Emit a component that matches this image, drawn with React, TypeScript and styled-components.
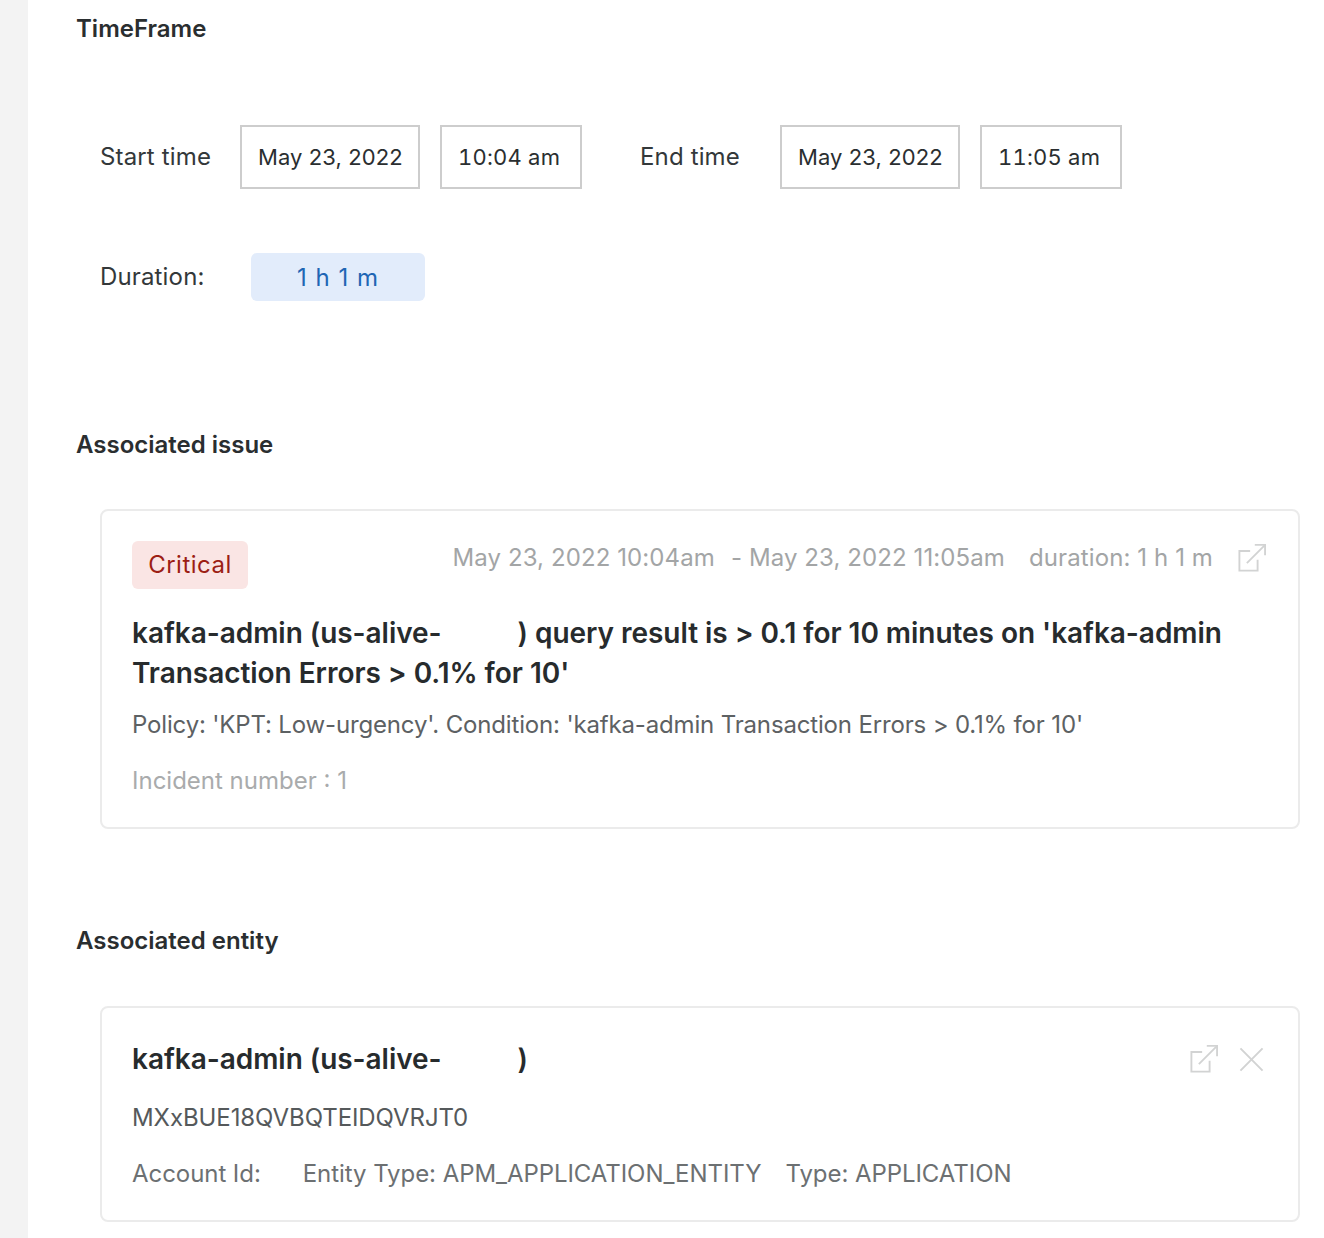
import React from "react";
import styled, { createGlobalStyle } from "styled-components";

const Global = createGlobalStyle`
  html, body { margin: 0; padding: 0; background: #fff; }
  body { font-family: Inter, "Liberation Sans", sans-serif; color: #2a2e30; }
`;

const Page = styled.div`
  display: flex;
  width: 1324px;
  height: 1238px;
  overflow: hidden;
`;
const Rail = styled.div`
  width: 28px;
  flex: none;
  background: #f3f3f3;
`;
const Main = styled.main`
  flex: 1;
  padding: 14px 24px 0 48px;
  min-width: 0;
`;
const Heading = styled.h2<{ $top?: number }>`
  margin: ${(p) => p.$top ?? 0}px 0 0;
  font-size: 24px;
  line-height: 29px;
  font-weight: 600;
  color: #2a2e30;
`;
const TimeRow = styled.div`
  display: flex;
  align-items: center;
  margin: 82px 0 0 24px;
`;
const Label = styled.span<{ $width: number }>`
  width: ${(p) => p.$width}px;
  flex: none;
  margin-top: -2px;
  font-size: 24px;
  line-height: 29px;
  letter-spacing: 0.15px;
  color: #33383a;
`;
const Field = styled.div<{ $width: number; $gap: number; $tabular?: boolean }>`
  width: ${(p) => p.$width}px;
  height: 64px;
  margin-right: ${(p) => p.$gap}px;
  flex: none;
  box-sizing: border-box;
  display: flex;
  align-items: center;
  padding-left: 16px;
  border: 2px solid #cdcdcd;
  font-size: 22px;
  letter-spacing: ${(p) => (p.$tabular ? 0.2 : 0.1)}px;
  font-variant-numeric: ${(p) => (p.$tabular ? "tabular-nums" : "normal")};
  color: #2a2e30;
  white-space: nowrap;
`;
const DurationRow = styled.div`
  display: flex;
  align-items: center;
  margin: 64px 0 0 24px;
`;
const DurationChip = styled.div`
  width: 174px;
  height: 48px;
  display: flex;
  align-items: center;
  justify-content: center;
  border-radius: 6px;
  background: #e2ecfb;
  color: #1f66b4;
  font-size: 24px;
  letter-spacing: 1px;
`;
const Card = styled.section<{ $height: number; $top: number }>`
  margin: ${(p) => p.$top}px 0 0 24px;
  width: 1200px;
  height: ${(p) => p.$height}px;
  box-sizing: border-box;
  border: 2px solid #ebebeb;
  border-radius: 8px;
  padding: 30px 30px 0;
`;
const CardTop = styled.div`
  display: flex;
  align-items: flex-start;
  justify-content: space-between;
`;
const Severity = styled.div`
  width: 116px;
  height: 48px;
  padding-bottom: 2px;
  box-sizing: border-box;
  display: flex;
  align-items: center;
  justify-content: center;
  border-radius: 6px;
  background: #fae5e4;
  color: #9c1e14;
  font-size: 24px;
  letter-spacing: 0.5px;
`;
const Meta = styled.div`
  display: flex;
  align-items: center;
  height: 32px;
  font-size: 24px;
  letter-spacing: 0.1px;
  color: #a3a5a6;
  white-space: nowrap;
`;
const MetaItem = styled.span<{ $left?: number }>`
  margin-left: ${(p) => p.$left ?? 0}px;
`;
const IconSlot = styled.span<{ $left: number }>`
  display: flex;
  margin: 2px 2px 0 ${(p) => p.$left}px;
  color: #d2d3d3;
`;
const Title = styled.h3<{ $top: number }>`
  margin: ${(p) => p.$top}px 0 0;
  font-size: 28px;
  line-height: 40px;
  font-weight: 600;
  letter-spacing: -0.04px;
  color: #272b2d;
`;
const Redacted = styled.span<{ $width: number }>`
  display: inline-block;
  width: ${(p) => p.$width}px;
`;
const Policy = styled.p`
  margin: 16px 0 0;
  font-size: 24px;
  line-height: 32px;
  letter-spacing: -0.16px;
  color: #5d6163;
  white-space: nowrap;
`;
const Incident = styled.p`
  margin: 24px 0 0;
  font-size: 24px;
  line-height: 32px;
  color: #a9abac;
`;
const EntityHead = styled.div`
  display: flex;
  align-items: center;
  justify-content: space-between;
  padding-top: 1px;
`;
const EntityIcons = styled.div`
  display: flex;
  align-items: center;
  gap: 21px;
  margin-right: 4px;
  color: #d2d3d3;
`;
const Guid = styled.p`
  margin: 23px 0 0;
  font-size: 24px;
  line-height: 32px;
  letter-spacing: -0.08px;
  color: #55595b;
`;
const Facts = styled.div`
  display: flex;
  margin-top: 24px;
  font-size: 24px;
  line-height: 32px;
  letter-spacing: -0.06px;
  color: #6c7072;
  white-space: nowrap;
`;
const Fact = styled.span<{ $left?: number }>`
  margin-left: ${(p) => p.$left ?? 0}px;
`;

const ExpandIcon = () => (
  <svg width="28" height="28" viewBox="0 0 30 30" fill="none" stroke="currentColor" strokeWidth="2">
    <path d="M13 7.5H1.5V28.5H21V17" />
    <path d="M9.5 20.5L28.5 1.5" />
    <path d="M18 1H29V12" />
  </svg>
);
const CloseIcon = () => (
  <svg width="25" height="25" viewBox="0 0 26 26" fill="none" stroke="currentColor" strokeWidth="2">
    <path d="M1.5 1.5L24.5 24.5M24.5 1.5L1.5 24.5" />
  </svg>
);

export default function App() {
  return (
    <Page>
      <Global />
      <Rail />
      <Main>
        <Heading>TimeFrame</Heading>
        <TimeRow>
          <Label $width={140}>Start time</Label>
          <Field $width={180} $gap={20}>May 23, 2022</Field>
          <Field $width={142} $gap={58} $tabular>10:04 am</Field>
          <Label $width={140}>End time</Label>
          <Field $width={180} $gap={20}>May 23, 2022</Field>
          <Field $width={142} $gap={0} $tabular>11:05 am</Field>
        </TimeRow>
        <DurationRow>
          <Label $width={151}>Duration:</Label>
          <DurationChip>1 h 1 m</DurationChip>
        </DurationRow>
        <Heading $top={129}>Associated issue</Heading>
        <Card $height={320} $top={50}>
          <CardTop>
            <Severity>Critical</Severity>
            <Meta>
              <MetaItem>May 23, 2022 10:04am</MetaItem>
              <MetaItem $left={16}>- May 23, 2022 11:05am</MetaItem>
              <MetaItem $left={24}>duration: 1 h 1 m</MetaItem>
              <IconSlot $left={25}><ExpandIcon /></IconSlot>
            </Meta>
          </CardTop>
          <Title $top={24}>
            kafka-admin (us-alive-<Redacted $width={76} />) query result is &gt; 0.1 for 10 minutes on 'kafka-admin Transaction Errors &gt; 0.1% for 10'
          </Title>
          <Policy>Policy: 'KPT: Low-urgency'. Condition: 'kafka-admin Transaction Errors &gt; 0.1% for 10'</Policy>
          <Incident>Incident number : 1</Incident>
        </Card>
        <Heading $top={97}>Associated entity</Heading>
        <Card $height={216} $top={51}>
          <EntityHead>
            <Title $top={0}>kafka-admin (us-alive-<Redacted $width={76} />)</Title>
            <EntityIcons>
              <ExpandIcon />
              <CloseIcon />
            </EntityIcons>
          </EntityHead>
          <Guid>MXxBUE18QVBQTEIDQVRJT0</Guid>
          <Facts>
            <Fact>Account Id:</Fact>
            <Fact $left={42}>Entity Type: APM_APPLICATION_ENTITY</Fact>
            <Fact $left={24}>Type: APPLICATION</Fact>
          </Facts>
        </Card>
      </Main>
    </Page>
  );
}
